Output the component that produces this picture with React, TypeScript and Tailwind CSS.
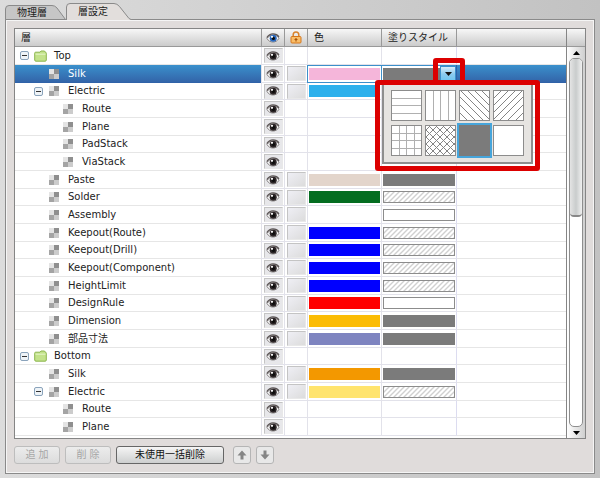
import { useState } from "react";
import clsx from "clsx";

type Fill = "solid" | "hatch" | "empty";

type Layer = {
  name: string;
  level: number;
  folder?: boolean;
  open?: boolean;
  lock?: boolean;
  color?: string;
  fill?: Fill;
};

const layers: Layer[] = [
  { name: "Top", level: 0, folder: true, open: true },
  { name: "Silk", level: 1, lock: true, color: "#f5b6da", fill: "solid" },
  { name: "Electric", level: 1, open: true, lock: true, color: "#2cb0ec", fill: "solid" },
  { name: "Route", level: 2 },
  { name: "Plane", level: 2 },
  { name: "PadStack", level: 2 },
  { name: "ViaStack", level: 2 },
  { name: "Paste", level: 1, lock: true, color: "#e3d5cb", fill: "solid" },
  { name: "Solder", level: 1, lock: true, color: "#046d20", fill: "hatch" },
  { name: "Assembly", level: 1, lock: true, color: "#ffffff", fill: "empty" },
  { name: "Keepout(Route)", level: 1, lock: true, color: "#0000ff", fill: "hatch" },
  { name: "Keepout(Drill)", level: 1, lock: true, color: "#0000ff", fill: "hatch" },
  { name: "Keepout(Component)", level: 1, lock: true, color: "#0000ff", fill: "hatch" },
  { name: "HeightLimit", level: 1, lock: true, color: "#0000ff", fill: "hatch" },
  { name: "DesignRule", level: 1, lock: true, color: "#ff0000", fill: "empty" },
  { name: "Dimension", level: 1, lock: true, color: "#fbbc05", fill: "solid" },
  { name: "部品寸法", level: 1, lock: true, color: "#7e84c0", fill: "solid" },
  { name: "Bottom", level: 0, folder: true, open: true },
  { name: "Silk", level: 1, lock: true, color: "#f39800", fill: "solid" },
  { name: "Electric", level: 1, open: true, lock: true, color: "#ffe46e", fill: "hatch" },
  { name: "Route", level: 2 },
  { name: "Plane", level: 2 },
];

const patterns = [
  { label: "横線", d: "M0 7.5H29M0 14.5H29M0 22.5H29" },
  { label: "縦線", d: "M7.5 0V29M14.5 0V29M22.5 0V29" },
  { label: "斜線（左）", d: "M0 22L7 29M0 14L15 29M0 6L23 29M1 0L29 28M8 0L29 21M15 0L29 14M22 0L29 7" },
  { label: "斜線（右）", d: "M0 7L7 0M0 14L14 0M0 21L21 0M0 28L28 0M6 29L29 6M14 29L29 14M22 29L29 22" },
  { label: "格子", d: "M0 7.5H29M0 14.5H29M0 22.5H29M7.5 0V29M14.5 0V29M22.5 0V29" },
  {
    label: "斜め格子",
    d: "M0 4L4 0M0 11L11 0M0 18L18 0M0 25L25 0M3 29L29 3M10 29L29 10M17 29L29 17M24 29L29 24M0 25L4 29M0 18L11 29M0 11L18 29M0 4L25 29M3 0L29 26M10 0L29 19M17 0L29 12M24 0L29 5",
  },
  { label: "塗りつぶし", d: "" },
  { label: "なし", d: "" },
];

function EyeIcon({ iris = "#2b2426" }: { iris?: string }) {
  return (
    <svg className="block h-3 w-[14px]" viewBox="0 0 14 12" aria-hidden="true">
      <path d="M1 6.500C3 3.800 5 3 7 3s4.500.8 6 3.200C11.500 9 9.500 10 7 10S2.500 9.200 1 6.500Z" fill="#f8f8f8" stroke="#6e6a6a" strokeWidth=".8" />
      <path d="M.8 5.600C2.600 2.900 4.600 1.800 7 1.800s4.500.9 6 3" fill="none" stroke="#5c5656" strokeWidth="1.200" />
      <circle cx="7.200" cy="6.200" r="3.500" fill={iris} />
      <circle cx="7.400" cy="6.400" r="1.600" fill="#0c0c0c" />
      <circle cx="6" cy="4.800" r="1.100" fill="#fff" />
    </svg>
  );
}

function LockIcon() {
  return (
    <svg className="block h-[13px] w-[12px]" viewBox="0 0 12 13" aria-hidden="true">
      <path d="M3.200 6V3.800a2.800 2.800 0 0 1 5.600 0V6" fill="none" stroke="#d9822b" strokeWidth="1.500" />
      <rect x="1" y="5.500" width="10" height="6.500" rx="1" fill="#f9bd68" stroke="#d5761a" />
      <path d="M6 7v3.500M4.500 8.500h3" stroke="#a85208" strokeWidth="1.200" />
    </svg>
  );
}

function FolderIcon() {
  return (
    <svg className="block h-[12px] w-[13px]" viewBox="0 0 13 12" aria-hidden="true">
      <path d="M.7 3.200Q.7 2.200 1.700 2.200H6L7 1h3.500l.8 1.200q1 0 1 1V10q0 1.200-1.200 1.200H2Q.7 11.200.7 10Z" fill="#c3e28a" stroke="#8cb64e" />
      <path d="M1.500 4.200h10" stroke="#e6f5c8" />
    </svg>
  );
}

function LayerIcon() {
  return (
    <svg className="block size-[10px]" viewBox="0 0 10 10" aria-hidden="true">
      <rect width="5" height="5" fill="#e4e4e4" />
      <rect x="5" width="5" height="5" fill="#8f8f8f" />
      <rect y="5" width="5" height="5" fill="#a4a4a4" />
      <rect x="5" y="5" width="5" height="5" fill="#cccccc" />
    </svg>
  );
}

function ArrowIcon({ down }: { down?: boolean }) {
  return (
    <svg className={clsx("block size-[10px]", down && "rotate-180")} viewBox="0 0 10 10" aria-hidden="true">
      <path d="M5 .5L9.500 5.500H6.500v4h-3v-4H.5Z" fill="#858585" />
    </svg>
  );
}

function FillSwatch({ fill }: { fill: Fill }) {
  if (fill === "solid") return <div className="h-3 w-full bg-[#7b7b7b]" />;
  return (
    <div className="h-3 w-full border border-[#8c8c8c] bg-white">
      {fill === "hatch" && (
        <svg className="block size-full" aria-hidden="true">
          <defs>
            <pattern id="hatch" width="5" height="5" patternUnits="userSpaceOnUse">
              <path d="M-1 6L6 -1M-1 1L1 -1M4 6L6 4" stroke="#d0d0d0" strokeWidth="1.400" />
            </pattern>
          </defs>
          <rect width="100%" height="100%" fill="url(#hatch)" />
        </svg>
      )}
    </div>
  );
}

function PatternPicker({ value, onChange }: { value: number; onChange: (i: number) => void }) {
  return (
    <div className="absolute top-[15px] left-0 z-10 border-2 border-[#8e8e8e] bg-[#e6e4e1] px-[7px] pt-[7px] pb-[6px]">
      <div className="grid grid-cols-[repeat(4,31px)] gap-x-[3px] gap-y-1">
        {patterns.map((p, i) => (
          <button
            key={p.label}
            type="button"
            aria-label={p.label}
            aria-pressed={i === value}
            onClick={() => onChange(i)}
            className={clsx(
              "size-[31px] border",
              i === value ? "border-[#7b7b7b] ring-2 ring-[#46a5db]" : "border-[#8c8c8c]",
              i === 6 ? "bg-[#7b7b7b]" : "bg-white"
            )}
          >
            <svg className="block size-[29px]" viewBox="0 0 29 29" aria-hidden="true">
              <path d={p.d} stroke={i > 1 && i !== 4 ? "#858585" : "#b0b0b0"} fill="none" />
            </svg>
          </button>
        ))}
      </div>
      <div className="pointer-events-none absolute -inset-x-[9px] -top-[3px] -bottom-[9px] rounded-[3px] border-[5px] border-[#dc0000]" />
    </div>
  );
}

function LayerRow({ layer, selected }: { layer: Layer; selected: boolean }) {
  const [pattern, setPattern] = useState(6);
  return (
    <tr className="h-[18px] nth-[3n]:h-[17px]">
      <td
        className={clsx(
          "border-b p-0",
          selected ? "border-[#2f62a8] bg-linear-to-b from-[#3a90cc] to-[#3365a9] text-white" : "border-[#e6e6e6]"
        )}
      >
        <div className={clsx("flex h-4 items-center", ["pl-[5px]", "pl-[19px]", "pl-[33px]"][layer.level])}>
          {layer.open ? (
            <button
              type="button"
              aria-label={`${layer.name}を閉じる`}
              className="flex size-[9px] items-center justify-center rounded-[2px] border border-[#8aa3bb] bg-[#eef3f7]"
            >
              <span className="h-px w-[5px] bg-[#333]" />
            </button>
          ) : (
            <span className="size-[9px]" />
          )}
          <span className="ml-[5px] w-[14px]">
            {layer.folder ? <FolderIcon /> : <span className="ml-px block"><LayerIcon /></span>}
          </span>
          <span className="ml-[6px]">{layer.name}</span>
        </div>
      </td>
      <td className="border-b border-l border-[#e2e2ea] p-0">
        <button
          type="button"
          aria-label={`${layer.name}の表示`}
          className="mx-auto flex h-[15px] w-[19px] items-center justify-center border border-r-[#e8e8e8] border-b-[#e8e8e8] border-t-[#c4c4c4] border-l-[#c4c4c4] bg-[#e7e7ea]"
        >
          <EyeIcon />
        </button>
      </td>
      <td className="border-b border-l border-[#e2e2ea] p-0">
        {layer.lock && (
          <button
            type="button"
            aria-label={`${layer.name}のロック`}
            className="mx-auto block h-[15px] w-[19px] border border-r-[#e8e8e8] border-b-[#e8e8e8] border-t-[#c4c4c4] border-l-[#c4c4c4] bg-linear-to-br from-[#efeff5] to-[#dcdcdc]"
          />
        )}
      </td>
      <td className={clsx("border-b border-l px-px py-0", selected ? "border-t border-[#3c8fca]" : "border-[#e2e2ea]")}>
        {layer.color && <div className="h-3 w-full" style={{ backgroundColor: layer.color }} />}
      </td>
      <td className={clsx("relative border-b border-l px-px py-0", selected ? "border-t border-[#3c8fca]" : "border-[#e2e2ea]")}>
        {layer.fill && <FillSwatch fill={layer.fill} />}
        {selected && (
          <>
            <button
              type="button"
              aria-label="塗りスタイルを選択"
              className="absolute inset-y-0 right-0 flex w-4 items-center justify-center border border-[#3c8fca] bg-linear-to-b from-[#d8eefa] via-[#8ccbee] to-[#6dc4f0]"
            >
              <svg className="h-1 w-[7px]" viewBox="0 0 7 4" aria-hidden="true">
                <path d="M0 0h7L3.500 4Z" fill="#111" />
              </svg>
            </button>
            <div className="pointer-events-none absolute -top-2 -right-[9px] -bottom-1 w-8 rounded-[3px] border-[5px] border-[#dc0000]" />
            <PatternPicker value={pattern} onChange={setPattern} />
          </>
        )}
      </td>
      <td
        className={clsx(
          "border-b border-l p-0",
          selected ? "border-[#2f62a8] bg-linear-to-b from-[#3a90cc] to-[#3365a9]" : "border-b-[#e6e6e6] border-l-[#dcdcf0]"
        )}
      />
    </tr>
  );
}

const headCell = "border-b border-l border-[#999] p-0 pl-[6px] text-left font-normal";

function LayerTable() {
  return (
    <div className="flex h-[411px] overflow-hidden border border-[#858585] bg-white">
      <div className="min-w-0 flex-1 overflow-hidden">
        <table className="w-full table-fixed border-separate border-spacing-0">
          <colgroup>
            <col />
            <col className="w-[23px]" />
            <col className="w-[23px]" />
            <col className="w-[74px]" />
            <col className="w-[75px]" />
            <col className="w-[110px]" />
          </colgroup>
          <thead>
            <tr className="h-[18px] bg-linear-to-b from-[#f7f7f7] to-[#c9c9c9]">
              <th className="border-b border-[#999] p-0 pl-[6px] text-left font-normal">層</th>
              <th className="border-b border-l border-[#999] p-0" aria-label="表示">
                <div className="flex justify-center"><EyeIcon iris="#2767bd" /></div>
              </th>
              <th className="border-b border-l border-[#999] p-0" aria-label="ロック">
                <div className="flex justify-center"><LockIcon /></div>
              </th>
              <th className={headCell}>色</th>
              <th className={headCell}>塗りスタイル</th>
              <th className={headCell} aria-label="備考" />
            </tr>
          </thead>
          <tbody>
            {layers.map((layer, i) => (
              <LayerRow key={i} layer={layer} selected={i === 1} />
            ))}
          </tbody>
        </table>
      </div>
      <div className="flex w-[19px] flex-col border-l border-[#858585]">
        <div className="h-[18px] border-b border-[#999] bg-linear-to-b from-[#f7f7f7] to-[#c9c9c9]" />
        <div className="flex flex-1 flex-col items-center bg-linear-to-r from-white to-[#cfcfcf]">
          <button type="button" aria-label="上へスクロール" className="flex h-[11px] w-full items-center justify-center">
            <svg className="h-1 w-[7px]" viewBox="0 0 7 4" aria-hidden="true"><path d="M0 4h7L3.500 0Z" /></svg>
          </button>
          <div className="w-[14px] flex-1 rounded-[5px] border border-[#8e8e8e] bg-white">
            <div className="h-[158px] rounded-[4px] border-b-2 border-[#888] bg-linear-to-r from-[#e4e4e4] via-[#c9cccc] to-[#f0f0f0]" />
          </div>
          <button type="button" aria-label="下へスクロール" className="flex h-[11px] w-full items-center justify-center">
            <svg className="h-1 w-[7px]" viewBox="0 0 7 4" aria-hidden="true"><path d="M0 0h7L3.500 4Z" /></svg>
          </button>
        </div>
      </div>
    </div>
  );
}

export default function App() {
  return (
    <div className="flex min-h-screen flex-col bg-linear-to-r from-[#dcdcdc] to-[#c2c2c2] px-[5px] pt-[3px] pb-1 font-['DejaVu_Sans','Noto_Sans_CJK_JP',sans-serif] text-[10px] leading-4 text-[#222]">
      <div role="tablist" className="relative z-10 flex h-[17px] items-end">
        <button role="tab" type="button" aria-selected="false" className="relative h-4 w-[61px] pt-px pl-3 text-left">
          <svg className="absolute inset-0 size-full" viewBox="0 0 61 16" aria-hidden="true">
            <path d="M.5 15.500V5Q.5 1.500 4 1.500H47Q50 1.500 52 4L60.500 15.500Z" fill="#c6c6c6" stroke="#8a8a8a" />
          </svg>
          <span className="relative">物理層</span>
        </button>
        <button role="tab" type="button" aria-selected="true" className="relative h-[17px] w-[66px] pt-px pl-3 text-left">
          <svg className="absolute inset-0 size-full" viewBox="0 0 66 17" aria-hidden="true">
            <path d="M.5 17V4Q.5 .5 4 .5H48Q51 .5 53.500 3.500L63 15.500L66 17" fill="#e2dedc" stroke="#8a8a8a" />
          </svg>
          <span className="relative">層設定</span>
        </button>
      </div>
      <div className="-mt-px flex-1 border border-[#8a8a8a] bg-[#e0dcdb] px-2 pt-2 inset-shadow-[0_0_0_1px_#f5f5f5]">
        <LayerTable />
        <div className="mt-[7px] flex items-center">
          <button type="button" disabled className="h-[18px] w-[46px] rounded-[3px] border border-[#bdbdbd] bg-linear-to-b from-[#ececec] to-[#dcdcdc] text-[#a5a5a5]">追 加</button>
          <button type="button" disabled className="ml-[5px] h-[18px] w-[46px] rounded-[3px] border border-[#bdbdbd] bg-linear-to-b from-[#ececec] to-[#dcdcdc] text-[#a5a5a5]">削 除</button>
          <button type="button" className="ml-[5px] h-[18px] w-[108px] rounded-[3px] border border-[#666] bg-linear-to-b from-[#f5f5f5] to-[#cdcfcf] text-[#111]">未使用一括削除</button>
          <button type="button" aria-label="上へ" className="ml-[9px] flex size-[18px] items-center justify-center rounded-[3px] border border-[#b5b5b5] bg-[#e8e8e8]"><ArrowIcon /></button>
          <button type="button" aria-label="下へ" className="ml-[5px] flex size-[18px] items-center justify-center rounded-[3px] border border-[#b5b5b5] bg-[#e8e8e8]"><ArrowIcon down /></button>
        </div>
      </div>
    </div>
  );
}
